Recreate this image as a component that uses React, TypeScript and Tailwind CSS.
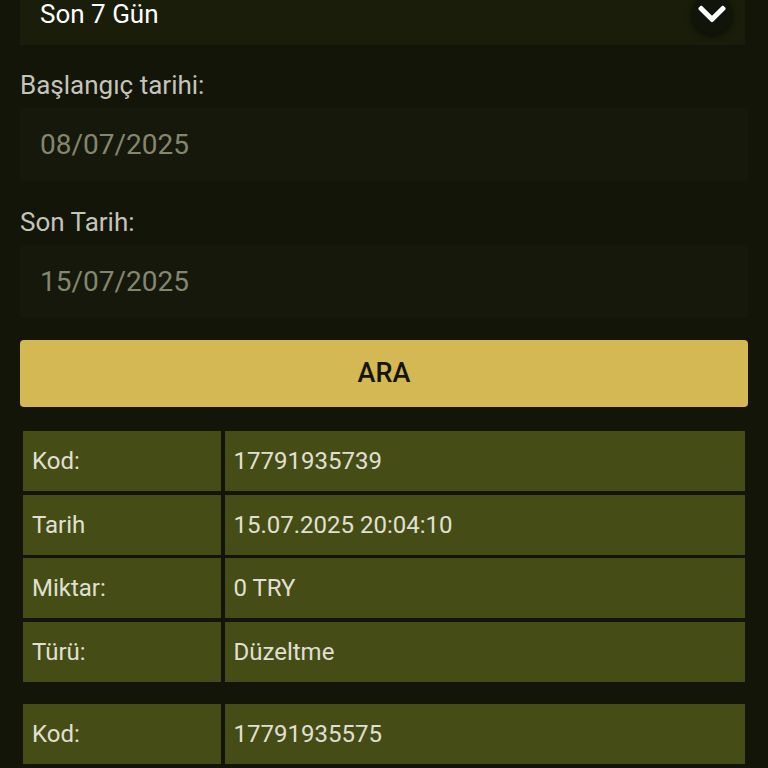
import React from "react";
import { FaChevronDown } from "react-icons/fa";

type Row = { label: string; value: string };

const records: Row[][] = [
  [
    { label: "Kod:", value: "17791935739" },
    { label: "Tarih", value: "15.07.2025 20:04:10" },
    { label: "Miktar:", value: "0 TRY" },
    { label: "Türü:", value: "Düzeltme" },
  ],
  [{ label: "Kod:", value: "17791935575" }],
];

const RecordTable = ({ rows }: { rows: Row[] }) => (
  <div className="grid grid-cols-[198px_1fr] gap-[3.5px] px-[3px]">
    {rows.map((r) => (
      <React.Fragment key={r.label}>
        <div className="h-[60px] bg-[#454c15] pl-[9px] flex items-center text-[24px] text-[#e0e0d2]">
          {r.label}
        </div>
        <div className="h-[60px] bg-[#454c15] pl-[9px] flex items-center text-[24px] text-[#e0e0d2]">
          {r.value}
        </div>
      </React.Fragment>
    ))}
  </div>
);

const App = () => {
  return (
    <div className="h-screen overflow-hidden bg-[#131509] font-['Roboto',sans-serif]">
      <div className="px-5 -mt-[25px]">
        {/* period select */}
        <div className="h-[70px] mr-[3px] bg-[#191d09] flex items-center justify-between pl-5 pr-[13px] pt-2 mb-[25px]">
          <span className="text-[26px] text-white leading-[30px]">Son 7 Gün</span>
          <div className="w-10 h-10 rounded-full bg-[#11140a] shadow-[0_2px_6px_rgba(0,0,0,0.6)] flex items-center justify-center text-white">
            <FaChevronDown size={32} />
          </div>
        </div>

        <div className="text-[26px] leading-[30px] text-[#c4c4bb] mb-2">Başlangıç tarihi:</div>
        <div className="h-[73px] bg-[#15180a] flex items-center pl-5 mb-[26px]">
          <span className="text-[28px] text-[#85866f]">08/07/2025</span>
        </div>

        <div className="text-[26px] leading-[30px] text-[#c4c4bb] mb-2">Son Tarih:</div>
        <div className="h-[73px] bg-[#15180a] flex items-center pl-5 mb-[22px]">
          <span className="text-[28px] text-[#85866f]">15/07/2025</span>
        </div>

        <button className="w-full h-[67px] rounded bg-[#d3b853] text-[27px] font-medium text-[#141407] flex items-center justify-center mb-6">
          ARA
        </button>

        <RecordTable rows={records[0]} />
        <div className="mt-[22px]">
          <RecordTable rows={records[1]} />
        </div>
      </div>
    </div>
  );
};

export default App;
